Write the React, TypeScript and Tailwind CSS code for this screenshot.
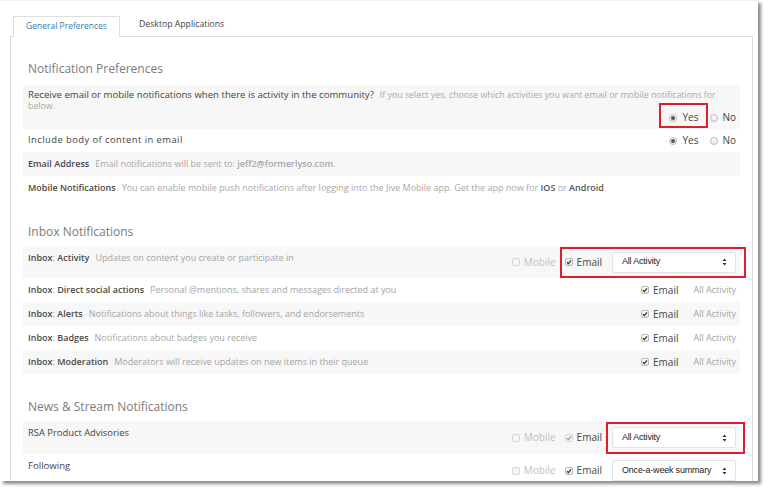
import React from "react";

const SANS = { fontFamily: '"Open Sans", "DejaVu Sans", sans-serif' };
const ARIAL = { fontFamily: '"Liberation Sans", Arial, sans-serif' };

function Radio({ on }: { on?: boolean }) {
  return (
    <span className="inline-flex h-[8px] w-[8px] items-center justify-center rounded-full border border-[#b9b9b9] bg-gradient-to-b from-white to-[#e8e8e8]">
      {on && <span className="h-[4px] w-[4px] rounded-full bg-[#555]" />}
    </span>
  );
}

function Check({ on, muted }: { on?: boolean; muted?: boolean }) {
  return (
    <span
      className={`inline-flex h-[8px] w-[8px] items-center justify-center rounded-[2px] border ${
        muted ? "border-[#d6d6d6] bg-[#f4f4f4]" : "border-[#b9b9b9] bg-gradient-to-b from-white to-[#e6e6e6]"
      }`}
    >
      {on && (
        <svg width="6" height="6" viewBox="0 0 6 6">
          <path
            d="M1 3.2 L2.4 4.6 L5 1.4"
            fill="none"
            stroke={muted ? "#9a9a9a" : "#333"}
            strokeWidth="1.3"
          />
        </svg>
      )}
    </span>
  );
}

function SelectBox({ label }: { label: string }) {
  return (
    <div
      style={ARIAL}
      className="flex h-[21px] w-[124px] items-center justify-between rounded-[2px] border border-[#e2e2e2] bg-white pl-[9px] pr-[8px] text-[9px] tracking-[-0.2px] text-[#222]"
    >
      <span>{label}</span>
      <svg width="5" height="8" viewBox="0 0 5 8">
        <path d="M2.5 0.5 L4.5 3 L0.5 3 Z" fill="#333" />
        <path d="M2.5 7.5 L4.5 5 L0.5 5 Z" fill="#333" />
      </svg>
    </div>
  );
}

function YesNo() {
  return (
    <div className="flex items-center text-[10px] leading-[11px] text-[#444]">
      <Radio on />
      <span className="ml-[5px]">Yes</span>
      <span className="ml-[12px]" />
      <Radio />
      <span className="ml-[4px]">No</span>
    </div>
  );
}

function Heading({ children }: { children: React.ReactNode }) {
  return <div className="h-[16px] pl-[5px] text-[12px] leading-[16px] text-[#7b7b7b]">{children}</div>;
}

function EmailOnly() {
  return (
    <div className="flex items-center text-[10px]">
      <Check on />
      <span className="ml-[4px] text-[#444]">Email</span>
      <span className="ml-[15px] text-[9px] text-[#a3a3a3]">All Activity</span>
    </div>
  );
}

function InboxRow({ name, desc, gray }: { name: string; desc: string; gray?: boolean }) {
  return (
    <div className={`flex h-[24px] items-center justify-between pl-[5px] pr-[4px] ${gray ? "bg-[#f7f7f7]" : ""}`}>
      <div className="text-[9px]">
        <span className="font-semibold text-[#4a4a4a]">Inbox</span>
        <span className="text-[#999]">: </span>
        <span className="font-semibold text-[#4a4a4a]">{name}</span>
        <span className="ml-[6px] text-[#a5a5a5]">{desc}</span>
      </div>
      <EmailOnly />
    </div>
  );
}

function StreamControls({ select, emailMuted }: { select: string; emailMuted?: boolean }) {
  return (
    <div className="flex items-center text-[10px]">
      <Check muted />
      <span className="ml-[4px] text-[#c2c2c2]">Mobile</span>
      <span className="ml-[9px]" />
      <Check on muted={emailMuted} />
      <span className="ml-[4px] text-[#444]">Email</span>
      <span className="ml-[10px]" />
      <SelectBox label={select} />
    </div>
  );
}

export default function App() {
  return (
    <div style={SANS} className="h-[490px] w-[770px] overflow-hidden bg-white">
      <div className="relative h-[481px] w-[758px] overflow-hidden border-t border-[#f0f0f0] bg-white shadow-[3px_3px_3px_rgba(0,0,0,0.45)]">
        {/* tabs */}
        <div className="flex h-[35px] items-end pl-[13px]">
          <div className="relative z-10 -mb-px flex h-[21px] w-[107px] items-center justify-center border border-b-0 border-[#dedede] bg-white pb-[1px] text-[8.5px] text-[#3a7ca5]">
            General Preferences
          </div>
          <div className="ml-[19px] flex h-[21px] items-center pb-[1px] text-[8.7px] text-[#444]">Desktop Applications</div>
        </div>

        {/* panel */}
        <div className="ml-[10px] w-[743px] border border-[#dedede] px-[12px] pt-[24px]">
          <Heading>Notification Preferences</Heading>
          <div className="mt-[8px]">
            <div className="relative h-[44px] bg-[#f7f7f7] pl-[5px] pr-[4px] pt-[4px]">
              <p className="pr-[1px] text-[8.8px] leading-[11px] text-[#a8a8a8]">
                <span className="text-[9.6px] text-[#444]">
                  Receive email or mobile notifications when there is activity in the community?
                </span>
                <span className="ml-[6px]">
                  If you select yes, choose which activities you want email or mobile notifications for
                </span>{" "}
                <span>below.</span>
              </p>
              <div className="flex justify-end">
                <YesNo />
              </div>
              <div className="pointer-events-none absolute left-[636px] top-[18px] h-[25px] w-[49px] border-2 border-[#dc1f2e]" />
            </div>
            <div className="flex h-[23px] items-center justify-between pl-[5px] pr-[4px]">
              <span className="text-[9.4px] tracking-[0.45px] text-[#444]">Include body of content in email</span>
              <YesNo />
            </div>
            <div className="flex h-[24px] items-center bg-[#f7f7f7] pl-[5px] text-[9px]">
              <span className="font-semibold text-[#4a4a4a]">Email Address</span>
              <span className="ml-[6px] text-[#a8a8a8]">
                Email notifications will be sent to: <span className="font-semibold">jeff2@formerlyso.com</span>.
              </span>
            </div>
            <div className="flex h-[23px] items-center pl-[5px] text-[9px]">
              <span className="font-semibold text-[#4a4a4a]">Mobile Notifications</span>
              <span className="ml-[6px] text-[#a8a8a8]">
                You can enable mobile push notifications after logging into the Jive Mobile app. Get the app now for{" "}
                <span className="font-semibold text-[#555]">IOS</span> or{" "}
                <span className="font-semibold text-[#555]">Android</span>.
              </span>
            </div>
          </div>

          <div className="mt-[25px]">
            <Heading>Inbox Notifications</Heading>
          </div>
          <div className="mt-[6px]">
            <div className="relative flex h-[32px] justify-between bg-[#f7f7f7] pl-[5px] pr-[4px]">
              <div className="pt-[6px] text-[9px] leading-[11px]">
                <span className="font-semibold text-[#4a4a4a]">Inbox</span>
                <span className="text-[#999]">: </span>
                <span className="font-semibold text-[#4a4a4a]">Activity</span>
                <span className="ml-[6px] text-[#a5a5a5]">Updates on content you create or participate in</span>
              </div>
              <div className="flex items-center">
                <StreamControls select="All Activity" />
              </div>
              <div className="pointer-events-none absolute left-[537px] top-[1px] h-[31px] w-[186px] border-2 border-[#dc1f2e]" />
            </div>
            <InboxRow name="Direct social actions" desc="Personal @mentions, shares and messages directed at you" />
            <InboxRow gray name="Alerts" desc="Notifications about things like tasks, followers, and endorsements" />
            <InboxRow name="Badges" desc="Notifications about badges you receive" />
            <InboxRow gray name="Moderation" desc="Moderators will receive updates on new items in their queue" />
          </div>

          <div className="mt-[25px]">
            <Heading>News &amp; Stream Notifications</Heading>
          </div>
          <div className="mt-[6px]">
            <div className="relative flex h-[33px] justify-between bg-[#f7f7f7] pl-[5px] pr-[4px]">
              <div className="pt-[6px] text-[9.4px] leading-[11px] text-[#444]">RSA Product Advisories</div>
              <div className="flex items-center">
                <StreamControls select="All Activity" emailMuted />
              </div>
              <div className="pointer-events-none absolute left-[583px] top-[1px] h-[32px] w-[139px] border-2 border-[#dc1f2e]" />
            </div>
            <div className="flex h-[33px] justify-between pl-[5px] pr-[4px]">
              <div className="pt-[6px] text-[9.6px] leading-[11px] text-[#444]">Following</div>
              <div className="flex items-center">
                <StreamControls select="Once-a-week summary" />
              </div>
            </div>
          </div>
        </div>
      </div>
    </div>
  );
}
